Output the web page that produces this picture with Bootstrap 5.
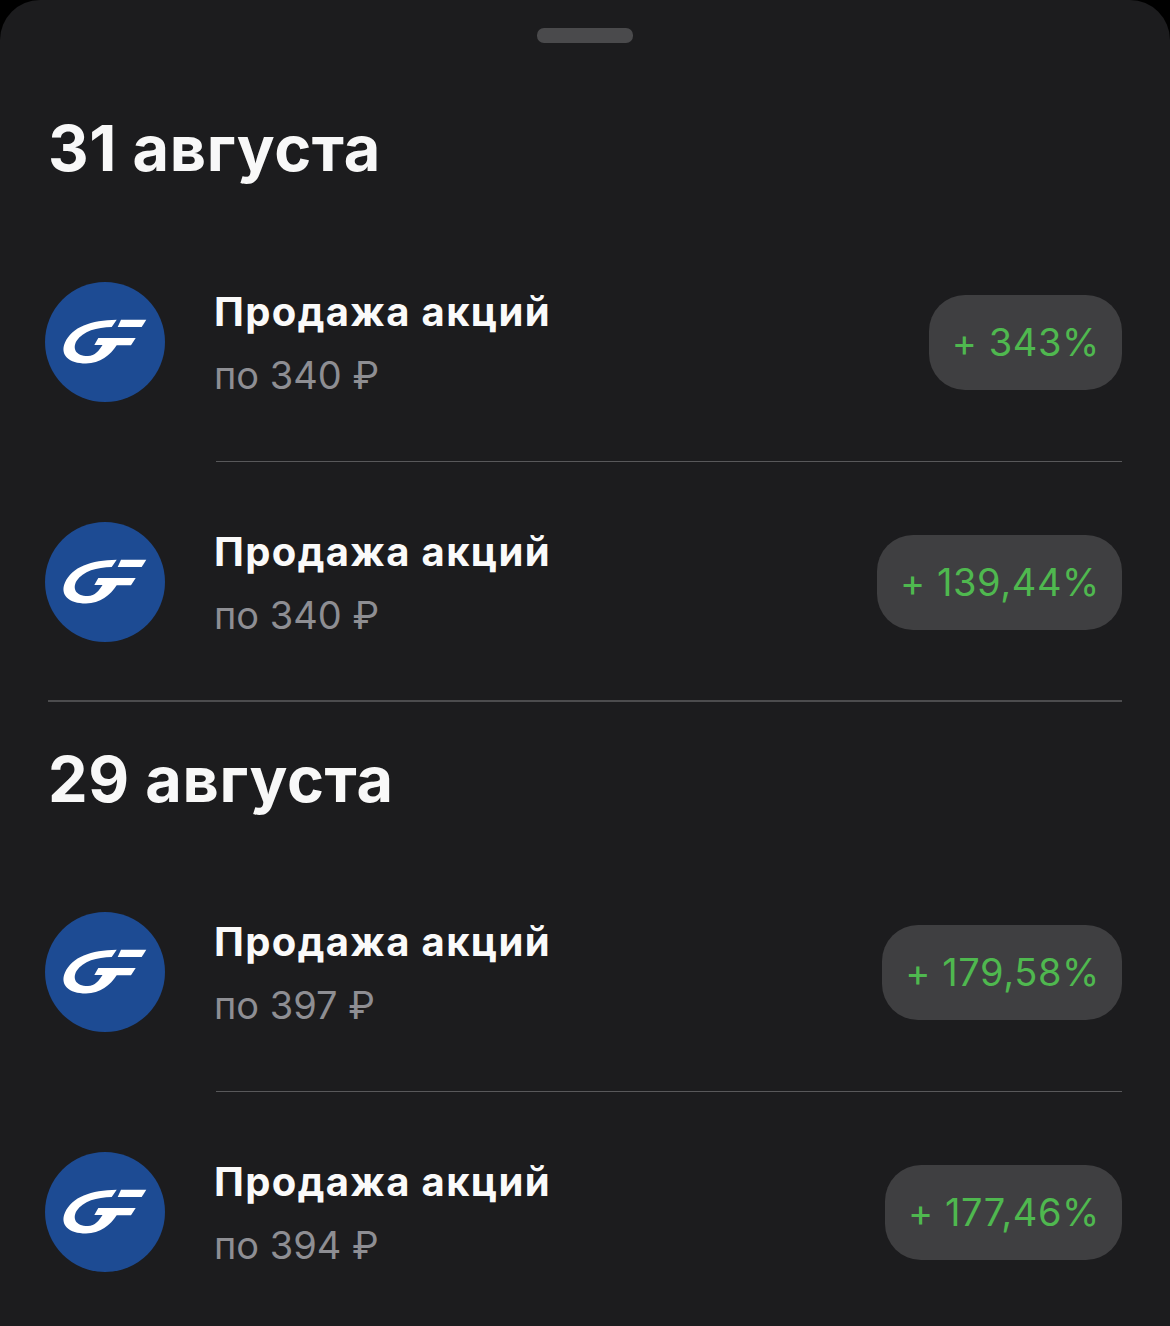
<!DOCTYPE html>
<html lang="ru">
<head>
  <meta charset="UTF-8">
  <title>Сделки</title>
  <meta name="viewport" content="width=device-width, initial-scale=1">
  <link href="https://cdn.jsdelivr.net/npm/bootstrap@5.3.2/dist/css/bootstrap.min.css" rel="stylesheet">
  <style>
    html, body { height: 100%; }
    body { background: #000; font-family: Inter, "Liberation Sans", sans-serif; overflow: hidden; }
    .sheet { background: #1c1c1e; border-radius: 40px 40px 0 0; height: 1326px; overflow: hidden; }
    .grabber { width: 96px; height: 15px; border-radius: 7px; background: #4a4a4c; margin: 0 auto; }
    .grab-wrap { padding-top: 28px; }
    .day-title { color: #f8f8f8; font-size: 63px; font-weight: 700; line-height: 72px; letter-spacing: .6px; margin: 0; padding-left: 48px; }
    .first-day { padding-top: 69px; height: 179px; }
    .next-day { padding-top: 41px; height: 150px; }
    .deal-row { height: 239px; padding-left: 45px; padding-right: 48px; }
    .deal-logo { width: 120px; height: 120px; flex: none; display: block; }
    .deal-text { margin-left: 49px; padding-top: 3px; }
    .deal-name { color: #fafafa; font-size: 40px; font-weight: 700; line-height: 48px; letter-spacing: 1.35px; }
    .deal-price { color: #8e8e93; font-size: 38px; line-height: 46px; margin-top: 16px; }
    .deal-pill { background: #3f3f41; color: #4fb84f; border-radius: 36px; height: 95px; margin-top: 2px; padding: 0 22px 0 23px; font-size: 38px; letter-spacing: .6px; }
    .rule-inner { height: 1px; background: #58585a; margin-left: 216px; margin-right: 48px; }
    .rule-full { height: 2px; margin-top: -1px; background: #4c4c4e; margin-left: 48px; margin-right: 48px; }
  </style>
</head>
<body>
  <svg width="0" height="0" class="position-absolute">
    <symbol id="gf" viewBox="0 0 120 120">
      <circle cx="60" cy="60" r="60" fill="#1d4b93"/>
      <path fill="#fff" d="M71.700 37.700L66.700 45C52 45.300 38 49 31.500 59C27.500 66 30 74 43 74C50 74 54 68.500 57.500 63H49.300L53.300 56H90.700L86 63.300H71.700C65.500 73 55 81.500 41 81.500C24 81.500 14.500 73 20 60.500C27 45 46 38 71.700 37.700Z"/>
      <path fill="#fff" d="M76 37.700H101.300L96.700 45H72.700Z"/>
    </symbol>
  </svg>
  <div class="sheet">
    <div class="grab-wrap"><div class="grabber"></div></div>
    <div class="first-day"><h1 class="day-title">31 августа</h1></div>

    <div class="deal-row d-flex align-items-center">
      <svg class="deal-logo"><use href="#gf"/></svg>
      <div class="deal-text flex-grow-1">
        <div class="deal-name">Продажа акций</div>
        <div class="deal-price">по 340 ₽</div>
      </div>
      <div class="deal-pill d-flex align-items-center">+ 343%</div>
    </div>
    <div class="rule-inner"></div>
    <div class="deal-row d-flex align-items-center">
      <svg class="deal-logo"><use href="#gf"/></svg>
      <div class="deal-text flex-grow-1">
        <div class="deal-name">Продажа акций</div>
        <div class="deal-price">по 340 ₽</div>
      </div>
      <div class="deal-pill d-flex align-items-center">+ 139,44%</div>
    </div>
    <div class="rule-full"></div>

    <div class="next-day"><h1 class="day-title">29 августа</h1></div>
    <div class="deal-row d-flex align-items-center">
      <svg class="deal-logo"><use href="#gf"/></svg>
      <div class="deal-text flex-grow-1">
        <div class="deal-name">Продажа акций</div>
        <div class="deal-price">по 397 ₽</div>
      </div>
      <div class="deal-pill d-flex align-items-center">+ 179,58%</div>
    </div>
    <div class="rule-inner"></div>
    <div class="deal-row d-flex align-items-center">
      <svg class="deal-logo"><use href="#gf"/></svg>
      <div class="deal-text flex-grow-1">
        <div class="deal-name">Продажа акций</div>
        <div class="deal-price">по 394 ₽</div>
      </div>
      <div class="deal-pill d-flex align-items-center">+ 177,46%</div>
    </div>
  </div>
  <script src="https://cdn.jsdelivr.net/npm/bootstrap@5.3.2/dist/js/bootstrap.bundle.min.js"></script>
</body>
</html>
